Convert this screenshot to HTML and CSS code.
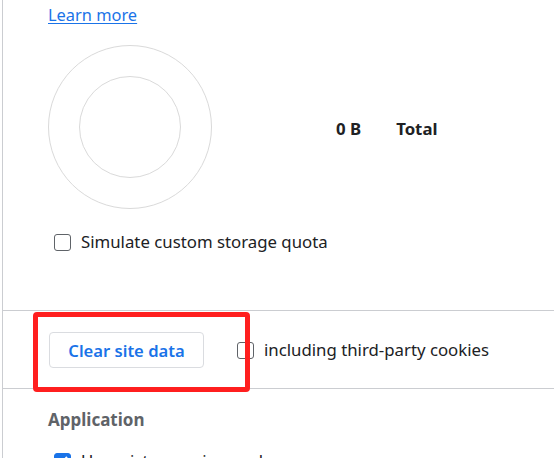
FILE: index.html
```html
<!DOCTYPE html>
<html>
<head>
<meta charset="utf-8">
<link rel="stylesheet" href="styles.css">
</head>
<body>
<div class="panel">
  <section class="usage">
    <a class="learn" href="#">Learn more</a>
    <div class="chart-row">
      <svg class="pie" width="166" height="166" viewBox="0 0 166 166">
        <circle cx="83" cy="83" r="81.5" fill="none" stroke="#dadada" stroke-width="1"/>
        <circle cx="83" cy="83" r="50.5" fill="none" stroke="#dadada" stroke-width="1"/>
      </svg>
      <div class="legend">
        <span class="size">0 B</span>
        <span class="label">Total</span>
      </div>
    </div>
    <label class="check-row"><span class="box"></span><span>Simulate custom storage quota</span></label>
  </section>
  <section class="clear">
    <button class="clear-btn">Clear site data</button>
    <label class="check-row"><span class="box"></span><span>including third-party cookies</span></label>
    <div class="highlight"></div>
  </section>
  <section class="app">
    <h2 class="heading">Application</h2>
    <label class="check-row"><span class="box checked"><svg width="17" height="17" viewBox="0 0 17 17"><path d="M4 8.5l3 3 6-6.5" fill="none" stroke="#fff" stroke-width="2"/></svg></span><span>Unregister service workers</span></label>
  </section>
</div>
</body>
</html>
```
FILE: styles.css
```css
html, body {
  margin: 0;
  padding: 0;
  background: #fff;
  overflow: hidden;
}
body {
  font-family: "Noto Sans", "Open Sans", sans-serif;
  color: #202124;
  font-size: 16px;
  height: 458px;
}
.panel {
  margin-left: 2px;
  border-left: 1px solid #cbcdd1;
  height: 458px;
}
.usage {
  padding: 4px 0 58px 45px;
  border-bottom: 1px solid #cbcdd1;
}
.learn {
  display: inline-block;
  color: #1a73e8;
  font-size: 16.4px;
  line-height: 22px;
  text-decoration: underline;
  text-underline-offset: 2px;
}
.chart-row {
  display: flex;
  align-items: center;
  margin-top: 18px;
}
.pie {
  display: block;
  margin-left: -1px;
}
.legend {
  display: flex;
  gap: 35px;
  margin-left: 123px;
  margin-top: 2px;
  font-weight: 700;
  font-size: 16.8px;
}
.check-row {
  display: flex;
  align-items: center;
  gap: 10px;
  font-size: 16.8px;
  line-height: 20px;
}
.usage .check-row {
  margin-top: 22px;
  padding-left: 6px;
}
.box {
  box-sizing: border-box;
  width: 17px;
  height: 17px;
  border: 1.5px solid #5f6368;
  border-radius: 3px;
  flex: none;
}
.box.checked {
  background: #1a73e8;
  border-color: #1a73e8;
}
.box.checked svg {
  display: block;
  margin: -1.5px;
}
.clear {
  position: relative;
  display: flex;
  align-items: center;
  gap: 33px;
  padding: 21px 0 20px 46px;
  border-bottom: 1px solid #cbcdd1;
}
.clear-btn {
  box-sizing: border-box;
  width: 155px;
  height: 36px;
  background: #fff;
  border: 1px solid #dadce0;
  border-radius: 4px;
  color: #1a73e8;
  font-family: inherit;
  font-size: 16.6px;
  font-weight: 600;
  padding: 0;
}
.highlight {
  position: absolute;
  left: 30px;
  top: 1px;
  width: 217px;
  height: 80px;
  box-sizing: border-box;
  border: 5px solid #ff1f1f;
  border-radius: 4px;
  z-index: 2;
}
.app {
  padding: 19px 0 0 45px;
}
.heading {
  margin: 0;
  font-size: 17px;
  line-height: 24px;
  font-weight: 700;
  color: #5f6368;
}
.app .check-row {
  margin-top: 19px;
  padding-left: 6px;
}
```
